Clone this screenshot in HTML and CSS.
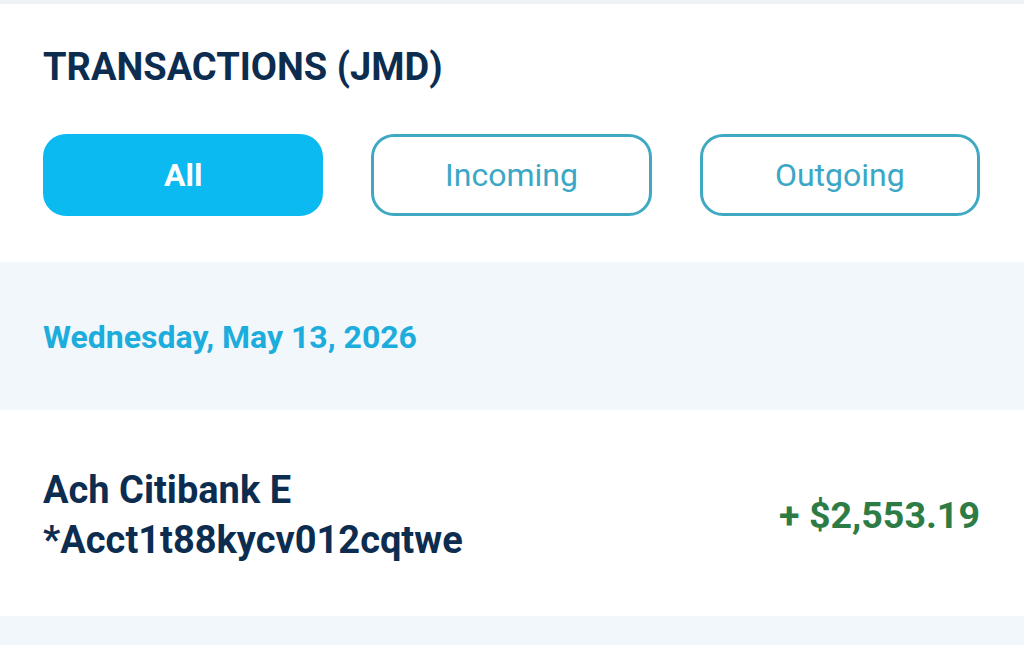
FILE: index.html
```html
<!DOCTYPE html>
<html lang="en">
<head>
<meta charset="utf-8">
<title>Transactions</title>
<link rel="stylesheet" href="styles.css">
</head>
<body>
<div class="top-strip"></div>
<section class="header">
  <h1 class="title">TRANSACTIONS (JMD)</h1>
  <div class="filters">
    <button class="filter active">All</button>
    <button class="filter">Incoming</button>
    <button class="filter">Outgoing</button>
  </div>
</section>
<div class="date-band">Wednesday, May 13, 2026</div>
<div class="tx-row">
  <div class="tx-name">Ach Citibank E<br>*Acct1t88kycv012cqtwe</div>
  <div class="tx-amount">+ $2,553.19</div>
</div>
<div class="bottom-band"></div>
</body>
</html>
```
FILE: styles.css
```css
* { box-sizing: border-box; }
html, body {
  margin: 0;
  padding: 0;
  background: #ffffff;
  font-family: Roboto, "Noto Sans", "Liberation Sans", sans-serif;
  overflow: hidden;
}
.top-strip {
  height: 4px;
  background: #eef2f6;
}
.header {
  padding: 41px 44px 46px 43px;
  background: #ffffff;
}
.title {
  margin: 0;
  font-size: 38px;
  line-height: 44px;
  font-weight: 700;
  color: #0c2d50;
  letter-spacing: 0;
}
.filters {
  margin-top: 45px;
  display: flex;
  gap: 48px;
}
.filter {
  width: 281px;
  height: 82px;
  border: 3px solid #3fa9c4;
  border-radius: 23px;
  background: #ffffff;
  color: #3aa7c6;
  font-family: inherit;
  font-size: 32px;
  font-weight: 400;
  padding: 0;
  display: flex;
  align-items: center;
  justify-content: center;
}
.filter.active {
  background: #0abaf0;
  border-color: #0abaf0;
  color: #ffffff;
  font-weight: 700;
}
.date-band {
  background: #f2f7fb;
  padding: 56px 43px 54px;
  font-size: 32px;
  line-height: 38px;
  font-weight: 700;
  color: #1daddc;
}
.tx-row {
  display: flex;
  align-items: center;
  justify-content: space-between;
  padding: 55px 44px 51px 43px;
  background: #ffffff;
}
.tx-name {
  font-size: 38px;
  line-height: 50px;
  font-weight: 700;
  color: #0c2d50;
}
.tx-amount {
  font-size: 37.6px;
  line-height: 50px;
  font-weight: 700;
  color: #2d7c46;
}
.bottom-band {
  height: 40px;
  background: #f2f7fb;
}
```
